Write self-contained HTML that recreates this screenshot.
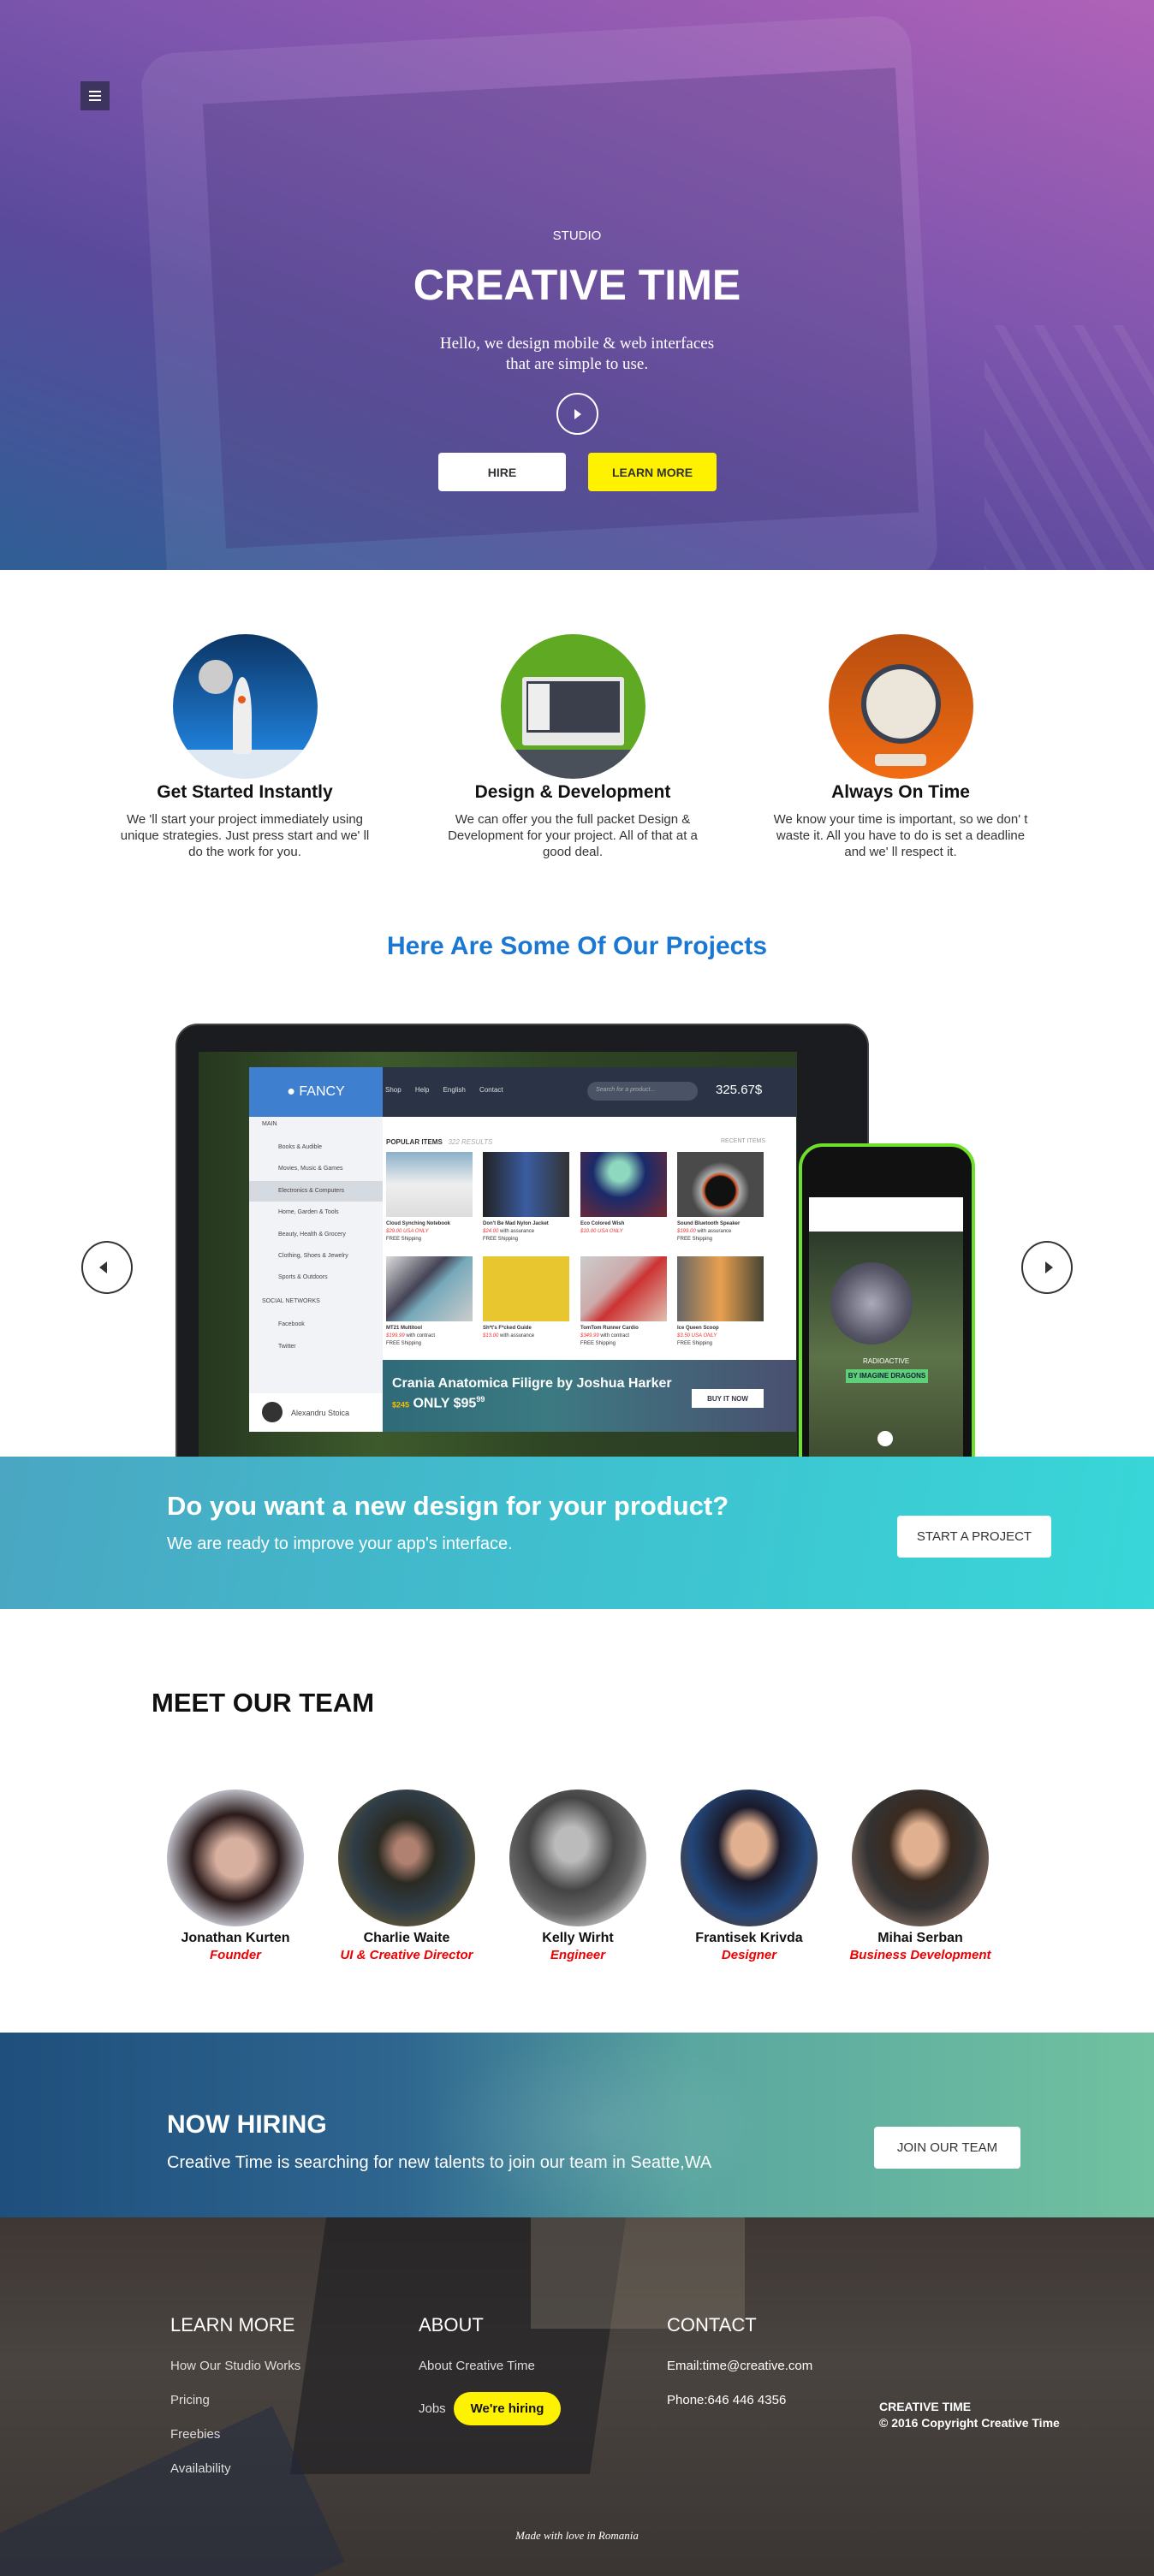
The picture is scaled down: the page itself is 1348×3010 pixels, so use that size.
<!DOCTYPE html>
<html><head><meta charset="utf-8">
<style>
*{margin:0;padding:0;box-sizing:border-box}
html,body{width:1348px;height:3010px;overflow:hidden}
body{font-family:"Liberation Sans",sans-serif;background:#fff}
#w{position:relative;width:1348px;height:3010px;overflow:hidden}
.a{position:absolute}
.c{text-align:center}
.btn{position:absolute;background:#fff;border-radius:4px;display:flex;align-items:center;justify-content:center;font-size:15px;color:#333}
.feat h3{font-size:21px;font-weight:bold;color:#111;margin-bottom:10px}
.feat p{font-size:15px;line-height:19px;color:#333}
.feat{position:absolute;width:310px;text-align:center;top:914px}
.circ{position:absolute;width:169px;height:169px;border-radius:50%;top:741px;overflow:hidden}
.prod{position:absolute;width:101px;height:76px}
.ptx{position:absolute;font-size:6px;line-height:9px;color:#333}
.ptx b{display:block}
.ptx i{color:#e33}
.side{position:absolute;left:14px;font-size:7px;color:#444}
.mem{position:absolute;top:2091px;width:160px;height:160px;border-radius:50%;overflow:hidden}
.nm{position:absolute;top:2256px;width:220px;text-align:center;font-size:16px;font-weight:bold;color:#111}
.rl{position:absolute;top:2276px;width:240px;text-align:center;font-size:15px;font-style:italic;font-weight:bold;color:#e00}
.fh{position:absolute;top:2704px;font-size:22px;color:#fff}
.fl{position:absolute;font-size:15px;color:#ddd}
</style></head><body><div id="w">

<!-- HERO -->
<div class="a" style="left:0;top:0;width:1348px;height:666px;background:linear-gradient(20deg,#2f5f95 0%,#5a4a9c 35%,#7d55ad 60%,#b062b8 100%);overflow:hidden">
  <div class="a" style="left:180px;top:40px;width:900px;height:660px;border-radius:40px;background:rgba(255,255,255,0.08);transform:rotate(-3deg)"></div>
  <div class="a" style="left:250px;top:100px;width:810px;height:520px;background:rgba(60,40,110,0.25);transform:rotate(-3deg)"></div>
  <div class="a" style="left:1150px;top:380px;width:260px;height:300px;background:repeating-linear-gradient(60deg,rgba(255,255,255,0.06) 0 10px,transparent 10px 40px)"></div>
</div>
<div class="a" style="left:94px;top:95px;width:34px;height:34px;background:#3d3560"></div>
<div class="a" style="left:104px;top:106px;width:14px;height:2px;background:#fff;box-shadow:0 5px 0 #fff,0 10px 0 #fff"></div>
<div class="a c" style="left:0;width:1348px;top:267px;font-size:15px;color:#fff">STUDIO</div>
<div class="a c" style="left:0;width:1348px;top:304px;font-size:50px;font-weight:bold;color:#fff">CREATIVE TIME</div>
<div class="a c" style="left:0;width:1348px;top:390px;font-family:'Liberation Serif',serif;font-size:19px;line-height:24px;color:#fff">Hello, we design mobile &amp; web interfaces<br>that are simple to use.</div>
<div class="a" style="left:650px;top:459px;width:49px;height:49px;border:2px solid #fff;border-radius:50%"></div>
<div class="a" style="left:671px;top:478px;width:0;height:0;border-left:8px solid #fff;border-top:6px solid transparent;border-bottom:6px solid transparent"></div>
<div class="btn" style="left:512px;top:529px;width:149px;height:45px;font-weight:bold;font-size:14px">HIRE</div>
<div class="btn" style="left:687px;top:529px;width:150px;height:45px;background:#fff200;font-weight:bold;font-size:14px">LEARN MORE</div>

<!-- FEATURES -->
<div class="circ" style="left:202px;background:linear-gradient(180deg,#0c3565,#1f7fd8 80%,#dde8f3 80%)">
  <div class="a" style="left:30px;top:30px;width:40px;height:40px;border-radius:50%;background:#ccc"></div>
  <div class="a" style="left:70px;top:50px;width:22px;height:90px;border-radius:50% 50% 4px 4px;background:#eee"></div>
  <div class="a" style="left:76px;top:72px;width:9px;height:9px;border-radius:50%;background:#e55a1c"></div>
</div>
<div class="circ" style="left:585px;background:linear-gradient(180deg,#5faa22 80%,#4a505a 80%)">
  <div class="a" style="left:25px;top:50px;width:119px;height:80px;background:#e8e8e8;border-radius:3px"></div>
  <div class="a" style="left:30px;top:55px;width:109px;height:60px;background:#3b3f4b"></div>
  <div class="a" style="left:32px;top:58px;width:25px;height:54px;background:#eee"></div>
</div>
<div class="circ" style="left:968px;background:linear-gradient(180deg,#b84e10,#f26c12)">
  <div class="a" style="left:38px;top:35px;width:93px;height:93px;border-radius:50%;background:#ebe6d9;border:6px solid #3a4150"></div>
  <div class="a" style="left:54px;top:140px;width:60px;height:14px;border-radius:4px;background:#e8e1d4"></div>
</div>
<div class="feat" style="left:131px"><h3>Get Started Instantly</h3><p>We 'll start your project immediately using unique strategies. Just press start and we' ll do the work for you.</p></div>
<div class="feat" style="left:514px"><h3>Design &amp; Development</h3><p>We can offer you the full packet Design &amp; Development for your project. All of that at a good deal.</p></div>
<div class="feat" style="left:897px"><h3>Always On Time</h3><p>We know your time is important, so we don' t waste it. All you have to do is set a deadline and we' ll respect it.</p></div>

<div class="a c" style="left:0;width:1348px;top:1089px;font-size:30px;font-weight:bold;color:#1a78d2">Here Are Some Of Our Projects</div>

<!-- DEVICES -->
<div class="a" style="left:205px;top:1196px;width:810px;height:530px;background:#1b1c1f;border-radius:26px 26px 0 0;border:2px solid #444"></div>
<div class="a" style="left:232px;top:1229px;width:699px;height:480px;background:linear-gradient(90deg,#26371f,#3d5a2c 30%,#2e4424 60%,#2a3c22)"></div>
<div class="a" style="left:291px;top:1247px;width:639px;height:426px;background:#fff"></div>
<div class="a" style="left:291px;top:1247px;width:156px;height:58px;background:#3f7fd0;color:#fff;font-size:16px;display:flex;align-items:center;justify-content:center">&#9679;&nbsp;FANCY</div>
<div class="a" style="left:447px;top:1247px;width:483px;height:58px;background:#2b3447"></div>
<div class="a" style="left:450px;top:1269px;font-size:8px;color:#ddd;word-spacing:14px">Shop Help English Contact</div>
<div class="a" style="left:686px;top:1264px;width:129px;height:22px;border-radius:11px;background:#4a5366;font-size:7px;color:#aaa;padding:6px 10px;font-style:italic">Search for a product...</div>
<div class="a" style="left:836px;top:1265px;font-size:15px;color:#fff">325.67$</div>
<div class="a" style="left:291px;top:1305px;width:156px;height:368px;background:#f2f3f6"></div>
<div class="a" style="left:291px;top:1380px;width:156px;height:24px;background:#d5d9e0"></div>
<div class="side" style="left:306px;top:1310px">MAIN</div>
<div class="side" style="left:325px;top:1337px">Books &amp; Audible</div>
<div class="side" style="left:325px;top:1362px">Movies, Music &amp; Games</div>
<div class="side" style="left:325px;top:1388px">Electronics &amp; Computers</div>
<div class="side" style="left:325px;top:1413px">Home, Garden &amp; Tools</div>
<div class="side" style="left:325px;top:1439px">Beauty, Health &amp; Grocery</div>
<div class="side" style="left:325px;top:1464px">Clothing, Shoes &amp; Jewelry</div>
<div class="side" style="left:325px;top:1489px">Sports &amp; Outdoors</div>
<div class="side" style="left:306px;top:1517px">SOCIAL NETWORKS</div>
<div class="side" style="left:325px;top:1544px">Facebook</div>
<div class="side" style="left:325px;top:1570px">Twitter</div>
<div class="a" style="left:291px;top:1628px;width:156px;height:45px;background:#fff"></div>
<div class="a" style="left:306px;top:1638px;width:24px;height:24px;border-radius:50%;background:#333"></div>
<div class="side" style="left:340px;top:1646px;font-size:9px">Alexandru Stoica</div>
<div class="a" style="left:451px;top:1330px;font-size:8px;font-weight:bold;color:#333">POPULAR ITEMS <span style="color:#aaa;font-weight:normal;font-style:italic">&nbsp; 322 RESULTS</span></div>
<div class="a" style="left:842px;top:1330px;font-size:7px;color:#999">RECENT ITEMS</div>
<div class="prod" style="left:451px;top:1346px;background:linear-gradient(180deg,#8ab0c8,#eee 50%,#ddd)"></div>
<div class="prod" style="left:564px;top:1346px;background:linear-gradient(90deg,#222,#3a5ca0,#333)"></div>
<div class="prod" style="left:678px;top:1346px;background:radial-gradient(circle at 45% 30%,#8ed8c0 15%,#1a2a6a 40%,#7a2a30)"></div>
<div class="prod" style="left:791px;top:1346px;background:radial-gradient(circle at 50% 60%,#111 25%,#d05020 28%,#aaa 33%,#4a4a4a 50%)"></div>
<div class="prod" style="left:451px;top:1468px;background:linear-gradient(135deg,#ddd,#445 40%,#7ab 55%,#ccc)"></div>
<div class="prod" style="left:564px;top:1468px;background:#e8c630"></div>
<div class="prod" style="left:678px;top:1468px;background:linear-gradient(135deg,#ccc,#caa 40%,#c33 55%,#e0c0b0)"></div>
<div class="prod" style="left:791px;top:1468px;background:linear-gradient(90deg,#666,#e8a050 50%,#443)"></div>
<div class="ptx" style="left:451px;top:1426px"><b>Cloud Synching Notebook</b><i>$29.00 USA ONLY</i><br>FREE Shipping</div>
<div class="ptx" style="left:564px;top:1426px"><b>Don't Be Mad Nylon Jacket</b><i>$24.00</i> with assurance<br>FREE Shipping</div>
<div class="ptx" style="left:678px;top:1426px"><b>Eco Colored Wish</b><i>$10.00 USA ONLY</i></div>
<div class="ptx" style="left:791px;top:1426px"><b>Sound Bluetooth Speaker</b><i>$199.00</i> with assurance<br>FREE Shipping</div>
<div class="ptx" style="left:451px;top:1548px"><b>MT21 Multitool</b><i>$199.99</i> with contract<br>FREE Shipping</div>
<div class="ptx" style="left:564px;top:1548px"><b>Sh*t's F*cked Guide</b><i>$13.00</i> with assurance</div>
<div class="ptx" style="left:678px;top:1548px"><b>TomTom Runner Cardio</b><i>$349.99</i> with contract<br>FREE Shipping</div>
<div class="ptx" style="left:791px;top:1548px"><b>Ice Queen Scoop</b><i>$3.50 USA ONLY</i><br>FREE Shipping</div>
<div class="a" style="left:447px;top:1589px;width:483px;height:84px;background:linear-gradient(90deg,#2e6a78,#3c7a82 40%,#4a5070)"></div>
<div class="a" style="left:458px;top:1608px;font-size:16px;font-weight:bold;color:#fff">Crania Anatomica Filigre by Joshua Harker</div>
<div class="a" style="left:458px;top:1630px;font-size:16px;font-weight:bold;color:#fff"><span style="font-size:9px;color:#f5c200">$245</span> ONLY $95<sup style="font-size:9px">99</sup></div>
<div class="a" style="left:808px;top:1623px;width:84px;height:22px;background:#fff;font-size:8px;font-weight:bold;color:#334;display:flex;align-items:center;justify-content:center">BUY IT NOW</div>
<!-- phone -->
<div class="a" style="left:933px;top:1336px;width:206px;height:380px;background:#111;border:4px solid #6ee02c;border-radius:28px 28px 0 0"></div>
<div class="a" style="left:945px;top:1399px;width:180px;height:311px;background:linear-gradient(180deg,#fff 0,#fff 40px,#2b3a2a 40px,#5c7248 60%,#3d4a30)"></div>
<div class="a" style="left:970px;top:1475px;width:96px;height:96px;border-radius:50%;background:radial-gradient(circle,#aab 0,#556 60%,#334 100%)"></div>
<div class="a" style="left:988px;top:1600px;width:96px;height:16px;background:#5fd07a;font-size:8px;font-weight:bold;color:#123;text-align:center;line-height:16px">BY IMAGINE DRAGONS</div>
<div class="a" style="left:1008px;top:1586px;font-size:8px;color:#fff">RADIOACTIVE</div>
<div class="a" style="left:1025px;top:1672px;width:18px;height:18px;border-radius:50%;background:#fff"></div>
<!-- arrows -->
<div class="a" style="left:95px;top:1450px;width:60px;height:62px;border:2px solid #333;border-radius:50%"></div>
<div class="a" style="left:116px;top:1474px;border-right:9px solid #333;border-top:7px solid transparent;border-bottom:7px solid transparent"></div>
<div class="a" style="left:1193px;top:1450px;width:60px;height:62px;border:2px solid #333;border-radius:50%"></div>
<div class="a" style="left:1221px;top:1474px;border-left:9px solid #333;border-top:7px solid transparent;border-bottom:7px solid transparent"></div>

<!-- CTA -->
<div class="a" style="left:0;top:1702px;width:1348px;height:178px;background:linear-gradient(100deg,#4aa6c2 0%,#3fc0cf 50%,#38d7d8 100%)"></div>
<div class="a" style="left:195px;top:1742px;font-size:31px;font-weight:bold;color:#fff">Do you want a new design for your product?</div>
<div class="a" style="left:195px;top:1793px;font-size:20px;color:#fff">We are ready to improve your app's interface.</div>
<div class="btn" style="left:1048px;top:1771px;width:180px;height:49px">START A PROJECT</div>

<!-- TEAM -->
<div class="a" style="left:177px;top:1972px;font-size:31px;font-weight:bold;color:#111">MEET OUR TEAM</div>
<div class="mem" style="left:195px;background:radial-gradient(ellipse at 50% 50%,#d8b0a0 20%,#2a1a1a 45%,#b8b8c0 70%)"></div>
<div class="mem" style="left:395px;background:radial-gradient(ellipse at 50% 45%,#b08070 12%,#2a2a22 30%,#2f3d48 55%,#6a5a30 80%)"></div>
<div class="mem" style="left:595px;background:radial-gradient(ellipse at 45% 40%,#bbb 15%,#444 40%,#666 60%,#eee 85%)"></div>
<div class="mem" style="left:795px;background:radial-gradient(ellipse at 50% 40%,#e0b090 18%,#1a1a2a 32%,#23477a 60%,#5a4030 85%)"></div>
<div class="mem" style="left:995px;background:radial-gradient(ellipse at 50% 40%,#e0b090 18%,#3a2a20 32%,#333 55%,#a08070 85%)"></div>
<div class="nm" style="left:165px">Jonathan Kurten</div><div class="rl" style="left:155px">Founder</div>
<div class="nm" style="left:365px">Charlie Waite</div><div class="rl" style="left:355px">UI &amp; Creative Director</div>
<div class="nm" style="left:565px">Kelly Wirht</div><div class="rl" style="left:555px">Engineer</div>
<div class="nm" style="left:765px">Frantisek Krivda</div><div class="rl" style="left:755px">Designer</div>
<div class="nm" style="left:965px">Mihai Serban</div><div class="rl" style="left:955px">Business Development</div>

<!-- HIRING -->
<div class="a" style="left:0;top:2375px;width:1348px;height:216px;background:linear-gradient(90deg,#1f4f7c 0%,#2e6690 35%,#5aa6a0 60%,#70c2a0 100%)"></div>
<div class="a" style="left:500px;top:2375px;width:400px;height:216px;background:radial-gradient(ellipse at 50% 50%,rgba(255,255,255,0.1),transparent 70%)"></div>
<div class="a" style="left:195px;top:2466px;font-size:30px;font-weight:bold;color:#fff">NOW HIRING</div>
<div class="a" style="left:195px;top:2516px;font-size:20px;color:#fff">Creative Time is searching for new talents to join our team in Seatte,WA</div>
<div class="btn" style="left:1021px;top:2485px;width:171px;height:49px">JOIN OUR TEAM</div>

<!-- FOOTER -->
<div class="a" style="left:0;top:2591px;width:1348px;height:419px;background:linear-gradient(180deg,#3e3734,#4a4440 40%,#3a3533);overflow:hidden">
  <div class="a" style="left:360px;top:0;width:350px;height:300px;background:#1c1c22;opacity:0.6;transform:skewX(-8deg)"></div>
  <div class="a" style="left:620px;top:0;width:250px;height:130px;background:#8a8270;opacity:0.35"></div>
  <div class="a" style="left:-40px;top:300px;width:420px;height:200px;background:#202a40;opacity:0.5;transform:rotate(-25deg)"></div>
</div>
<div class="fh" style="left:199px">LEARN MORE</div>
<div class="fh" style="left:489px">ABOUT</div>
<div class="fh" style="left:779px">CONTACT</div>
<div class="fl" style="left:199px;top:2756px">How Our Studio Works</div>
<div class="fl" style="left:199px;top:2796px">Pricing</div>
<div class="fl" style="left:199px;top:2836px">Freebies</div>
<div class="fl" style="left:199px;top:2876px">Availability</div>
<div class="fl" style="left:489px;top:2756px">About Creative Time</div>
<div class="fl" style="left:489px;top:2806px">Jobs</div>
<div class="a" style="left:530px;top:2795px;width:125px;height:39px;border-radius:20px;background:#fff200;font-size:15px;font-weight:bold;color:#111;display:flex;align-items:center;justify-content:center">We're hiring</div>
<div class="fl" style="left:779px;top:2756px;color:#fff">Email:time@creative.com</div>
<div class="fl" style="left:779px;top:2796px;color:#fff">Phone:646 446 4356</div>
<div class="a" style="left:1027px;top:2803px;font-size:14px;font-weight:bold;color:#fff;line-height:19px">CREATIVE TIME<br>© 2016 Copyright Creative Time</div>
<div class="a c" style="left:0;width:1348px;top:2955px;font-family:'Liberation Serif',serif;font-style:italic;font-size:13px;color:#fff">Made with love in Romania</div>
</div></body></html>
